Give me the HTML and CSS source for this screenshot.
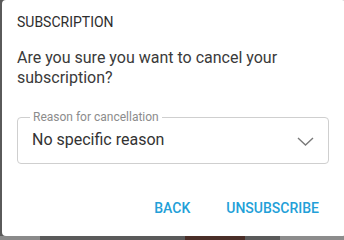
FILE: index.html
```html
<!DOCTYPE html>
<html>
<head>
<meta charset="utf-8">
<link rel="stylesheet" href="styles.css">
</head>
<body>
<div class="dialog">
  <h2 class="title">SUBSCRIPTION</h2>
  <p class="text">Are you sure you want to cancel your subscription?</p>
  <div class="field">
    <span class="label">Reason for cancellation</span>
    <span class="value">No specific reason</span>
    <svg class="chev" width="17" height="9" viewBox="0 0 17 9"><polyline points="1,1 8.5,8 16,1" fill="none" stroke="#7a7a7a" stroke-width="1.4"/></svg>
  </div>
  <div class="actions">
    <button class="btn back">BACK</button>
    <button class="btn">UNSUBSCRIBE</button>
  </div>
</div>
<div class="behind">
  <span class="b1"></span>
  <span class="b2"></span>
  <span class="b3"></span>
</div>
</body>
</html>
```

FILE: styles.css
```css
html, body {
  margin: 0;
  padding: 0;
}
body {
  width: 344px;
  height: 240px;
  overflow: hidden;
  background: #5a5a5a;
  font-family: Roboto, "Liberation Sans", sans-serif;
}
.dialog {
  box-sizing: border-box;
  margin-left: 2px;
  width: 344px;
  height: 236px;
  background: #fff;
  border-radius: 4px;
  padding: 12px 17px 0 15px;
}
.title {
  margin: 0;
  font-size: 14px;
  font-weight: 400;
  line-height: 20px;
  color: #2e2e2e;
  letter-spacing: 0;
}
.text {
  margin: 15.5px 0 0 0;
  font-size: 16px;
  line-height: 20px;
  color: #3a3a3a;
}
.field {
  position: relative;
  box-sizing: border-box;
  margin-top: 29px;
  height: 47px;
  border: 1px solid #cfcfcf;
  border-radius: 4px;
  display: flex;
  align-items: center;
  padding: 0 14px 0 14px;
}
.label {
  position: absolute;
  left: 12px;
  top: -8px;
  padding: 0 3px;
  background: #fff;
  font-size: 12px;
  line-height: 14px;
  color: #8c8c8c;
}
.value {
  flex: 1;
  font-size: 16px;
  line-height: 20px;
  color: #333;
}
.chev {
  margin-top: 2px;
}
.actions {
  display: flex;
  justify-content: flex-end;
  gap: 14px;
  margin-top: 26px;
  padding-right: 2px;
}
.btn {
  font-family: Roboto, "Liberation Sans", sans-serif;
  font-size: 14px;
  font-weight: 500;
  line-height: 36px;
  height: 36px;
  padding: 0 8px;
  min-width: 64px;
  border: 0;
  background: transparent;
  color: #239fd8;
  letter-spacing: 0;
}
.behind {
  display: flex;
  height: 4px;
  align-items: stretch;
}
.b1 {
  width: 40px;
  background: #8a8a8a;
}
.b2 {
  margin-left: 145px;
  width: 60px;
  background: #4a2e28;
}
.b3 {
  margin-left: 35px;
  width: 64px;
  background: #8c8c8c;
}
```
